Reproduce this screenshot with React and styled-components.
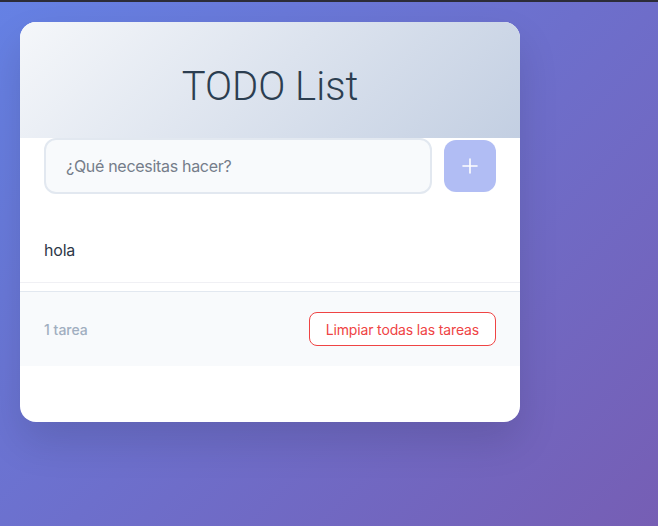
import React, { useState } from "react";
import styled, { createGlobalStyle } from "styled-components";

const GlobalStyle = createGlobalStyle`
  html, body {
    margin: 0;
    padding: 0;
    height: 100%;
  }
  body {
    font-family: Inter, "Noto Sans", "Liberation Sans", sans-serif;
  }
  * {
    box-sizing: border-box;
  }
`;

export default function App() {
  const [text, setText] = useState("");
  const [todos, setTodos] = useState([{ id: 1, text: "hola" }]);

  function addTodo(eve) {
    eve.preventDefault();
    if (!text.trim()) return;
    setTodos([...todos, { id: Date.now(), text: text.trim() }]);
    setText("");
  }

  return (
    <>
      <GlobalStyle />
      <Page>
        <Card>
          <Header>
            <Title>TODO List</Title>
          </Header>

          <Form onSubmit={addTodo}>
            <Input
              value={text}
              onChange={(e) => setText(e.target.value)}
              placeholder="¿Qué necesitas hacer?"
            />
            <AddButton type="submit" disabled={!text.trim()}>
              <svg width="18" height="18" viewBox="0 0 18 18">
                <path d="M9 2v14M2 9h14" stroke="#fff" strokeWidth="1.6" strokeLinecap="round" />
              </svg>
            </AddButton>
          </Form>

          <List>
            {todos.map((t) => (
              <Item key={t.id}>{t.text}</Item>
            ))}
          </List>

          <Footer>
            <Count>
              {todos.length} {todos.length === 1 ? "tarea" : "tareas"}
            </Count>
            <ClearButton onClick={() => setTodos([])}>Limpiar todas las tareas</ClearButton>
          </Footer>
        </Card>
      </Page>
    </>
  );
}

const Page = styled.div`
  min-height: 100vh;
  border-top: 2px solid #2c2c38;
  padding: 20px;
  background: linear-gradient(135deg, #6581e4 0%, #6d6fcc 50%, #765eb4 100%);
`;

const Card = styled.div`
  width: 500px;
  min-height: 400px;
  background: #ffffff;
  border-radius: 16px;
  overflow: hidden;
  box-shadow: 0 20px 40px rgba(0, 0, 0, 0.12);
`;

const Header = styled.div`
  height: 116px;
  display: flex;
  align-items: center;
  justify-content: center;
  padding-top: 12px;
  background: linear-gradient(135deg, #f5f7fa 0%, #c3cfe2 100%);
`;

const Title = styled.h1`
  margin: 0;
  font-family: Roboto, "Liberation Sans", sans-serif;
  font-size: 40px;
  font-weight: 300;
  color: #2c3e50;
`;

const Form = styled.form`
  display: flex;
  align-items: center;
  gap: 12px;
  padding: 0 24px;
`;

const Input = styled.input`
  flex: 1;
  height: 56px;
  padding: 0 20px;
  border: 2px solid #e2e8f0;
  border-radius: 12px;
  background: #f8fafc;
  font-family: inherit;
  font-size: 16px;
  letter-spacing: -0.3px;
  color: #2d3748;
  outline: none;

  &::placeholder {
    color: #757d8a;
  }

  &:focus {
    border-color: #667eea;
  }
`;

const AddButton = styled.button`
  width: 52px;
  height: 52px;
  border: none;
  border-radius: 12px;
  background: #667eea;
  display: flex;
  align-items: center;
  justify-content: center;
  cursor: pointer;

  &:disabled {
    opacity: 0.5;
    cursor: not-allowed;
  }
`;

const List = styled.ul`
  list-style: none;
  margin: 24px 0 8px;
  padding: 0;
`;

const Item = styled.li`
  padding: 20px 24px;
  line-height: 24px;
  font-size: 16px;
  letter-spacing: -0.2px;
  color: #2d3748;
  border-bottom: 1px solid #f0f0f4;
`;

const Footer = styled.div`
  display: flex;
  align-items: center;
  justify-content: space-between;
  padding: 20px 24px;
  background: #f8fafc;
  border-top: 1px solid #e2e8f0;
`;

const Count = styled.span`
  font-size: 14px;
  font-weight: 500;
  color: #a0aec0;
`;

const ClearButton = styled.button`
  height: 34px;
  padding: 0 16px;
  border: 1px solid #ef4444;
  border-radius: 8px;
  background: #ffffff;
  color: #ef4444;
  font-family: inherit;
  font-size: 14px;
  letter-spacing: -0.15px;
  cursor: pointer;

  &:hover {
    background: #fef2f2;
  }
`;
